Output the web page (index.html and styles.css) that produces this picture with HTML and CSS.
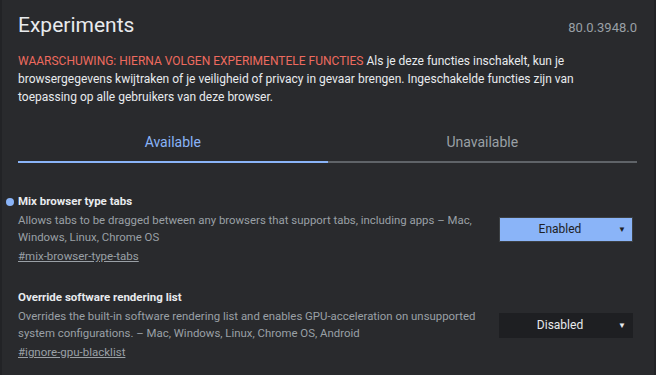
FILE: index.html
```html
<!DOCTYPE html>
<html lang="nl">
<head>
  <meta charset="UTF-8">
  <title>Experiments</title>
  <link rel="stylesheet" href="styles.css">
</head>
<body>
  <div class="page">
    <header class="header">
      <h1>Experiments</h1>
      <div class="version">80.0.3948.0</div>
    </header>

    <p class="warning"><span class="warning-label">WAARSCHUWING: HIERNA VOLGEN EXPERIMENTELE FUNCTIES</span> Als je deze functies inschakelt, kun je browsergegevens kwijtraken of je veiligheid of privacy in gevaar brengen. Ingeschakelde functies zijn van toepassing op alle gebruikers van deze browser.</p>

    <div class="tabs">
      <div class="tab active">Available</div>
      <div class="tab">Unavailable</div>
    </div>

    <div class="experiments">
      <div class="experiment modified">
        <div class="experiment-text">
          <div class="experiment-name">Mix browser type tabs</div>
          <div class="experiment-desc">Allows tabs to be dragged between any browsers that support tabs, including apps – Mac, Windows, Linux, Chrome OS</div>
          <a class="permalink" href="#mix-browser-type-tabs">#mix-browser-type-tabs</a>
        </div>
        <div class="select enabled">Enabled<span class="arrow">▼</span></div>
      </div>

      <div class="experiment">
        <div class="experiment-text">
          <div class="experiment-name">Override software rendering list</div>
          <div class="experiment-desc">Overrides the built-in software rendering list and enables GPU-acceleration on unsupported system configurations. – Mac, Windows, Linux, Chrome OS, Android</div>
          <a class="permalink" href="#ignore-gpu-blacklist">#ignore-gpu-blacklist</a>
        </div>
        <div class="select">Disabled<span class="arrow">▼</span></div>
      </div>
    </div>
  </div>
</body>
</html>
```

FILE: styles.css
```css
:root {
  --bg-color: #292a2d;
  --edge-color: #222326;
  --text-color: #e8eaed;
  --muted: #9aa0a6;
  --accent: #8ab4f8;
  --warning: #ee6a5f;
}

* {
  box-sizing: border-box;
}

body {
  margin: 0;
  background-color: var(--edge-color);
  color: var(--text-color);
  font-family: Roboto, "Liberation Sans", sans-serif;
  font-size: 12px;
}

.page {
  margin: 0 2px;
  min-height: 375px;
  background-color: var(--bg-color);
  padding: 11px 17px 0 16px;
}

.header {
  display: flex;
  justify-content: space-between;
  align-items: baseline;
}

h1 {
  margin: 0;
  font-size: 21px;
  font-weight: 400;
  line-height: 28px;
}

.version {
  color: var(--muted);
  font-size: 13px;
}

.warning {
  margin: 13px 0 0;
  font-size: 12px;
  line-height: 18px;
  max-width: 572px;
}

.warning-label {
  color: var(--warning);
}

.tabs {
  display: flex;
  margin-top: 18px;
  border-bottom: 2px solid #5f6368;
}

.tab {
  flex: 1;
  text-align: center;
  font-size: 14px;
  padding: 10px 0 11px;
  color: var(--muted);
  margin-bottom: -2px;
  border-bottom: 2px solid transparent;
}

.tab.active {
  color: var(--accent);
  border-bottom-color: var(--accent);
}

.experiments {
  padding-top: 30px;
}

.experiment {
  position: relative;
  display: flex;
  align-items: center;
  gap: 14px;
  margin-bottom: 24px;
}

.experiment.modified::before {
  content: "";
  position: absolute;
  left: -12px;
  top: 5px;
  width: 8px;
  height: 8px;
  border-radius: 50%;
  background-color: var(--accent);
}

.experiment-text {
  flex: 1;
  line-height: 17px;
}

.experiment-name {
  font-weight: 700;
  font-size: 11.5px;
  margin-bottom: 2px;
}

.experiment-desc {
  color: var(--muted);
  font-size: 11.4px;
}

.permalink {
  display: inline-block;
  margin-top: 2px;
  color: var(--muted);
  font-size: 11.5px;
}

.select {
  position: relative;
  flex: none;
  width: 134px;
  height: 25px;
  margin-right: 4px;
  line-height: 23px;
  text-align: center;
  font-size: 12px;
  background-color: #1e1f22;
  border: 1px solid #1e1f22;
  color: var(--text-color);
  padding-right: 12px;
}

.select.enabled {
  background-color: var(--accent);
  border-color: #3c4043;
  color: #202124;
}

.arrow {
  position: absolute;
  right: 6px;
  top: 0;
  font-size: 8px;
}
```
